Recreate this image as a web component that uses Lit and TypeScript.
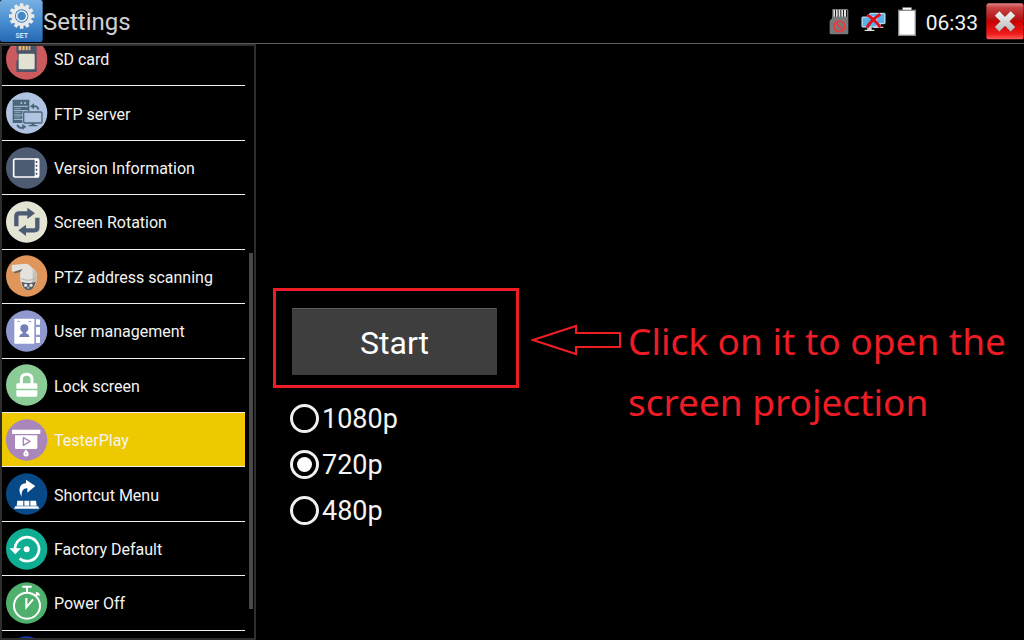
import { LitElement, html, css, svg } from "lit";
import { customElement, state } from "lit/decorators.js";

interface Entry {
  label: string;
  color: string;
  art: unknown;
}

const entries: Entry[] = [
  {
    label: "SD card",
    color: "#cb5a5e",
    art: svg`
      <path d="M34 20H92V99a3 3 0 0 1-3 3H34a3 3 0 0 1-3-3V70l4-5V48l-4-5V23z" fill="#4b5469"/>
      <path d="M38 20h8v17h-8zM49 20h7v17h-7zM59 20h6v17h-6zM68 20h5v17h-5z" fill="#e6b873"/>
      <rect x="38" y="47" width="48" height="47" rx="4" fill="#e3e3d3"/>`,
  },
  {
    label: "FTP server",
    color: "#b0c4e2",
    art: svg`
      <rect x="20" y="23" width="50" height="70" rx="2" fill="#4b6678"/>
      <path d="M24 43H66M24 56H66M24 69H52M24 82H52" stroke="#b0c4e2" stroke-width="3"/>
      <path d="M26 50H44M26 62H44M26 75H44" stroke="#b0c4e2" stroke-width="2"/>
      <circle cx="46" cy="33" r="3" fill="#b0c4e2"/><circle cx="57" cy="33" r="3" fill="#b0c4e2"/>
      <rect x="49" y="58" width="62" height="41" rx="4" fill="#b0c4e2"/>
      <rect x="53" y="60" width="55" height="33" rx="3" fill="#b0c4e2" stroke="#4b6678" stroke-width="4"/>
      <path d="M76 94h10v5h8v4H68v-4h8z" fill="#4b6678"/>
      <path d="M97 53C96 44 90 42 82 43M34 98C36 107 44 109 51 106" fill="none" stroke="#4b6678" stroke-width="6"/>
      <path d="M84 34V52L72 43zM49 96V114L61 104z" fill="#4b6678"/>`,
  },
  {
    label: "Version Information",
    color: "#4d5b73",
    art: svg`
      <rect x="23" y="36" width="75" height="54" rx="5" fill="none" stroke="#fff" stroke-width="5"/>
      <path d="M86 35H99V91H86z" fill="#fff"/>
      <path d="M89 42h5v6h-5zM89 53h5v6h-5zM89 65h5v6h-5zM89 77h5v6h-5z" fill="#4d5b73"/>`,
  },
  {
    label: "Screen Rotation",
    color: "#e4e4d5",
    art: svg`
      <path d="M31 76V46Q31 37 40 37H68M94 50V79Q94 88 85 88H58" fill="none" stroke="#4d5b73" stroke-width="13"/>
      <path d="M64 20V54L87 37zM60 71V105L37 88z" fill="#4d5b73"/>`,
  },
  {
    label: "PTZ address scanning",
    color: "#e0965a",
    art: svg`
      <path d="M17 30L60 26Q72 28 78 39L48 45 24 52 17 47z" fill="#e4e0da"/>
      <path d="M22 51L47 43 62 42 52 49 27 55z" fill="#6d655f"/>
      <path d="M43 52Q50 37 67 36Q86 37 92 54V73Q90 101 67 105Q45 101 42 72z" fill="#e4e2de"/>
      <path d="M80 42Q93 48 92 62V77Q89 98 74 102Q82 74 80 42z" fill="#c4bfb9"/>
      <path d="M42 68Q67 80 92 68V71Q67 83 42 71z" fill="#b5b0ab"/>
      <path d="M46 80Q67 88 89 80Q85 104 67 106Q50 103 46 80z" fill="#5b5d61"/>
      <circle cx="59" cy="91" r="5" fill="#e3e5e8"/><circle cx="75" cy="91" r="5" fill="#e3e5e8"/>
      <circle cx="67" cy="98" r="3" fill="#c9ccd0"/>`,
  },
  {
    label: "User management",
    color: "#8f99cf",
    art: svg`
      <rect x="25" y="26" width="60" height="75" rx="2" fill="#fff"/>
      <path d="M90 28h9q3 0 3 3v13H90zM90 51h12v23H90zM90 81h12v15q0 3-3 3h-9z" fill="#fff"/>
      <path d="M34 36q4-4 8-1M68 35q4-3 8 1" stroke="#8f99cf" stroke-width="3" fill="none"/>
      <circle cx="55" cy="55" r="12" fill="#7480b8"/>
      <path d="M50 63H60V70Q69 72 71 81H39Q41 72 50 70z" fill="#7480b8"/>`,
  },
  {
    label: "Lock screen",
    color: "#8bcb96",
    art: svg`
      <path d="M46 60V46Q46 31 62 31T78 46V60" fill="none" stroke="#fff" stroke-width="9"/>
      <path d="M31 62q0-4 4-4H90q4 0 4 4V74H31zM31 79H94V94q0 4-4 4H35q-4 0-4-4z" fill="#fff"/>`,
  },
  {
    label: "TesterPlay",
    color: "#a987bb",
    art: svg`
      <rect x="18" y="32" width="85" height="13" rx="2" fill="#fff"/>
      <path d="M27 49H94V86q0 4-4 4H31q-4 0-4-4z" fill="#fff"/>
      <path d="M52 56L72 67 52 79z" fill="none" stroke="#a987bb" stroke-width="4" stroke-linejoin="round"/>
      <path d="M60 91L67 101a8 8 0 1 1-14 0z" fill="#fff"/><circle cx="60" cy="104" r="2" fill="#a987bb"/>`,
  },
  {
    label: "Shortcut Menu",
    color: "#084a87",
    art: svg`
      <path d="M47 71C34 50 42 31 60 31V20L88 39 64 59V46C52 45 46 54 47 71z" fill="#fff"/>
      <path d="M34 83H52V98H32zM55 83H70V98H55zM73 83H90L92 98H73z" fill="#fff"/>
      <path d="M28 100H96L100 107H24z" fill="#fff"/>`,
  },
  {
    label: "Factory Default",
    color: "#0fae93",
    art: svg`
      <path d="M27 65A36 36 0 1 1 41 92" fill="none" stroke="#fff" stroke-width="8"/>
      <path d="M10 61H45L28 79z" fill="#fff"/>
      <circle cx="62" cy="64" r="9" fill="#fff"/>`,
  },
  {
    label: "Power Off",
    color: "#4faf6c",
    art: svg`
      <circle cx="63" cy="71" r="39" fill="none" stroke="#fff" stroke-width="6"/>
      <path d="M49 14H77M63 14V32M88 42L98 33" stroke="#fff" stroke-width="6"/>
      <path d="M90 31L101 40" stroke="#fff" stroke-width="5"/>
      <path d="M61 48V76L81 52" fill="none" stroke="#fff" stroke-width="6"/>`,
  },
  { label: "", color: "#1139b8", art: svg`` },
];

@customElement("app-root")
export class AppRoot extends LitElement {
  @state() private selected = "TesterPlay";
  @state() private resolution = "720p";

  static styles = css`
    :host {
      display: flex;
      flex-direction: column;
      height: 100vh;
      overflow: hidden;
      background: #000;
      color: #f4f4f4;
      font-family: Roboto, "Liberation Sans", sans-serif;
    }
    *,
    *::before {
      box-sizing: border-box;
    }
    button {
      margin: 0;
      padding: 0;
      border: 0;
      background: none;
      color: inherit;
      font: inherit;
    }
    svg {
      display: block;
      flex: none;
    }
    .bar {
      display: flex;
      align-items: center;
      flex: none;
      height: 44px;
      border-bottom: 1px solid #5a5a5a;
    }
    .title {
      flex: 1;
      margin: 0;
      font-size: 24px;
      font-weight: 400;
      color: #d0d0d0;
    }
    .status {
      display: flex;
      align-items: center;
    }
    .sd {
      margin-right: 12px;
    }
    .net {
      margin-right: 12px;
    }
    .clock {
      margin: 0 8px 0 10px;
      padding-top: 2px;
      font-size: 21px;
    }
    .body {
      display: flex;
      flex: 1;
      min-height: 0;
    }
    .side {
      display: flex;
      flex: none;
      width: 256px;
      border: 2px solid #2e2e2e;
      overflow: hidden;
    }
    .menu {
      display: flex;
      flex-direction: column;
      flex: 1;
      margin: -14px 0 -47px -2px;
      padding: 0;
      list-style: none;
    }
    .row {
      flex: 1;
      min-height: 54px;
      border-bottom: 1px solid #f0f0f0;
    }
    .entry {
      display: flex;
      align-items: center;
      gap: 6px;
      width: 100%;
      height: 100%;
      padding-left: 6px;
      font-size: 16px;
      text-align: left;
      white-space: nowrap;
    }
    .label {
      padding-top: 2px;
    }
    .current {
      background: #efc900;
    }
    .rail {
      width: 9px;
      padding: 207px 1px 29px 4px;
    }
    .thumb {
      height: 100%;
      background: #484848;
    }
    .main {
      flex: 1;
      display: flex;
      align-items: flex-start;
      gap: 12px;
      padding: 244px 0 0 17px;
    }
    .panel {
      flex: none;
      width: 246px;
    }
    .frame {
      padding: 17px 19px 10px 16px;
      border: 3px solid #ee1c25;
    }
    .start {
      display: block;
      width: 100%;
      height: 67px;
      padding-top: 2px;
      border-top: 1px solid #5c5c5c;
      border-radius: 1px;
      background: #3e3e3e;
      color: #fff;
      font-size: 32px;
    }
    .choices {
      display: flex;
      flex-direction: column;
      margin: 0;
      padding: 7px 0 0 17px;
      border: 0;
    }
    .choice {
      display: flex;
      align-items: center;
      gap: 3px;
      height: 46px;
      font-size: 27px;
    }
    .radio {
      appearance: none;
      display: grid;
      place-items: center;
      width: 29px;
      height: 29px;
      margin: 0;
      border: 3px solid #f0f0f0;
      border-radius: 50%;
    }
    .radio:checked::before {
      content: "";
      width: 15px;
      height: 15px;
      border-radius: 50%;
      background: #fff;
    }
    .hint {
      display: flex;
      flex: 1;
      align-items: flex-start;
      gap: 6px;
      padding-top: 22px;
      color: #ee1c25;
    }
    .arrow {
      margin-top: 14px;
    }
    .note {
      margin: 0;
      font-family: "Noto Sans", "Open Sans", sans-serif;
      font-size: 37px;
      line-height: 61px;
    }
  `;

  private gear() {
    const teeth = Array.from({ length: 12 }, (_, i) => i * 30);
    return html`<svg width="43" height="43" viewBox="0 0 129 129" aria-hidden="true">
      <defs>
        <linearGradient id="blue" x2="0" y2="1">
          <stop stop-color="#76b0e2" />
          <stop offset=".5" stop-color="#4a8fd1" />
          <stop offset="1" stop-color="#2467b4" />
        </linearGradient>
      </defs>
      <rect width="128" height="126" rx="7" fill="url(#blue)" />
      ${teeth.map(
        (a) => svg`<path d="M60 10H70L71 20H59z" fill="#e9e9e9" transform="rotate(${a} 65 48)"/>`
      )}
      <circle cx="65" cy="48" r="25" fill="none" stroke="#e9e9e9" stroke-width="11" />
      <circle cx="65" cy="48" r="20" fill="#4787c4" />
      <circle cx="65" cy="48" r="15" fill="none" stroke="#e4edf5" stroke-width="5" />
      <text x="65" y="113" text-anchor="middle" fill="#e8f2fb" font-size="21" font-weight="500">SET</text>
    </svg>`;
  }

  private statusIcons() {
    return html`
      <svg class="sd" width="20" height="26" viewBox="0 0 60 78" role="img" aria-label="No SD card">
        <path d="M13 0H54q4 0 4 4V72q0 4-4 4H6q-4 0-4-4V36L9 28V4q0-4 4-4z" fill="#77797b" />
        <path d="M11 3H54V23H11z" fill="#1c1c1c" />
        <path d="M13 3h5v20h-5zM21 3h5v20h-5zM29 3h5v20h-5zM37 3h5v20h-5zM45 3h6v20h-6z" fill="#e4e4e4" />
        <circle cx="31" cy="52" r="16" fill="none" stroke="#f0393c" stroke-width="5" />
        <path d="M20 41L42 63" stroke="#f0393c" stroke-width="5" />
      </svg>
      <svg class="net" width="25" height="20" viewBox="0 0 75 60" role="img" aria-label="No network">
        <rect x="26" y="4" width="46" height="31" rx="2" fill="#58b4e8" stroke="#dcebf4" stroke-width="3" />
        <path d="M44 37H60V44H67V48H38V44H44z" fill="#c9ced2" />
        <rect x="3" y="15" width="44" height="30" rx="2" fill="#58b4e8" stroke="#dcebf4" stroke-width="3" />
        <path d="M19 46H32V53H40V57H11V53H19z" fill="#d9dddf" />
        <path d="M18 9Q39 20 58 46M58 7Q33 22 18 46" fill="none" stroke="#e01020" stroke-width="9" />
      </svg>
      <svg width="18" height="29" viewBox="0 0 54 87" role="img" aria-label="Battery full">
        <rect x="14" y="2" width="26" height="9" fill="#fff" stroke="#8b8b8b" stroke-width="2" />
        <rect x="2" y="10" width="50" height="75" fill="#fff" stroke="#8b8b8b" stroke-width="4" />
      </svg>
    `;
  }

  render() {
    return html`
      <header class="bar">
        ${this.gear()}
        <h1 class="title">Settings</h1>
        <div class="status">
          ${this.statusIcons()}
          <time class="clock">06:33</time>
          <button aria-label="Close">
            <svg width="38" height="38" viewBox="0 0 114 114">
              <defs>
                <linearGradient id="red" x2="0" y2="1">
                  <stop stop-color="#e58384" />
                  <stop offset=".12" stop-color="#c84443" />
                  <stop offset=".42" stop-color="#b51616" />
                  <stop offset=".5" stop-color="#c90000" />
                  <stop offset=".85" stop-color="#f01b1b" />
                  <stop offset="1" stop-color="#ff5e5e" />
                </linearGradient>
                <linearGradient id="steel" x2="0" y2="1">
                  <stop stop-color="#f5f5f5" />
                  <stop offset="1" stop-color="#b9b9b9" />
                </linearGradient>
              </defs>
              <rect x="1" y="1" width="112" height="108" rx="8" fill="url(#red)" />
              <path
                d="M26 38L40 24 57 41 74 24 88 38 71 55 88 72 74 86 57 69 40 86 26 72 43 55z"
                fill="url(#steel)"
                stroke="#6d2b2b"
                stroke-width="1"
              />
            </svg>
          </button>
        </div>
      </header>
      <div class="body">
        <nav class="side" aria-label="Settings">
          <ul class="menu">
            ${entries.map(
              (e) => html`<li class="row">
                <button
                  class="entry ${e.label === this.selected ? "current" : ""}"
                  @click=${() => (this.selected = e.label)}
                >
                  <svg width="42" height="42" viewBox="0 0 126 126" aria-hidden="true">
                    <circle cx="62" cy="63" r="62" fill=${e.color} />
                    ${e.art}
                  </svg>
                  <span class="label">${e.label}</span>
                </button>
              </li>`
            )}
          </ul>
          <div class="rail"><div class="thumb"></div></div>
        </nav>
        <main class="main">
          <div class="panel">
            <div class="frame"><button class="start">Start</button></div>
            <fieldset class="choices" aria-label="Resolution">
              ${["1080p", "720p", "480p"].map(
                (r) => html`<label class="choice">
                  <input
                    class="radio"
                    type="radio"
                    name="resolution"
                    .checked=${r === this.resolution}
                    @change=${() => (this.resolution = r)}
                  />
                  <span class="label">${r}</span>
                </label>`
              )}
            </fieldset>
          </div>
          <div class="hint">
            <svg class="arrow" width="91" height="33" viewBox="0 0 91 33" aria-hidden="true">
              <path
                d="M2 16L45 2V9H89V23H45V30z"
                fill="none"
                stroke="currentColor"
                stroke-width="2"
              />
            </svg>
            <p class="note">Click on it to open the screen projection</p>
          </div>
        </main>
      </div>
    `;
  }
}
